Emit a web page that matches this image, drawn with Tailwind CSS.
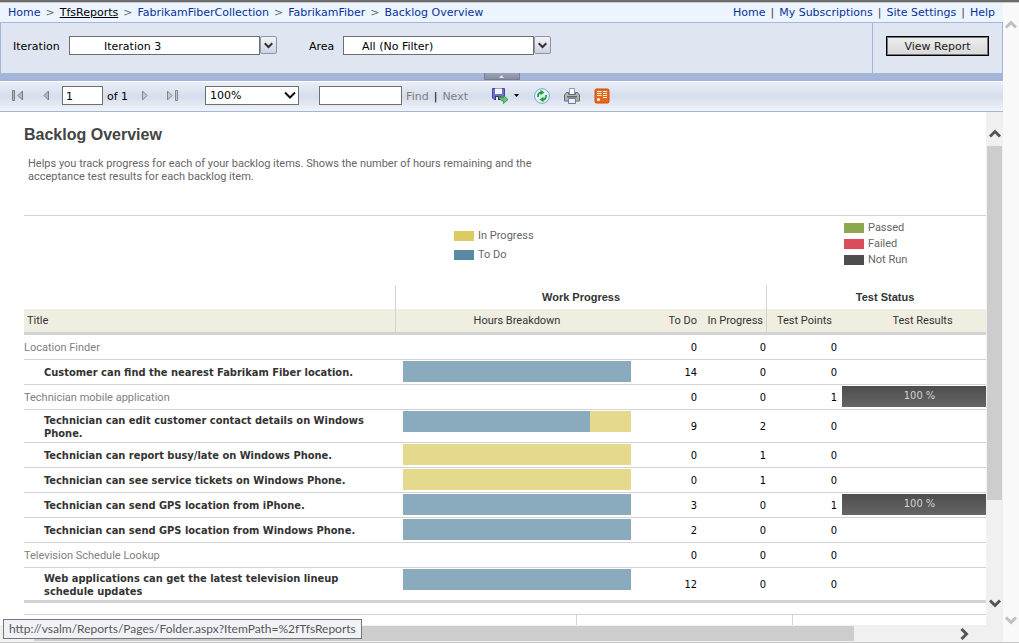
<!DOCTYPE html>
<html lang="en">
    <head>
        <meta charset="UTF-8">
        <meta name="viewport" content="width=device-width, initial-scale=1.0">
        <title>Backlog Overview</title>
        <script src="https://cdn.jsdelivr.net/npm/@tailwindcss/browser@4"></script>
    </head>
    <body class="h-screen flex flex-col bg-white border-t-2 border-[#6d6b6b] text-[11px] text-black font-['DejaVu_Sans','Verdana',sans-serif] overflow-hidden">
        <div class="flex flex-1 min-h-0 border-t border-b border-[#c8c8c8]">
            <div class="relative flex flex-col flex-1 min-w-0">

                <!-- Breadcrumb -->
                <header class="flex items-center justify-between h-[19px] shrink-0 px-2 pt-[2px] bg-[#ecf4ff] text-[#0a3399] whitespace-nowrap">
                    <nav class="flex gap-[5px]">
                        <a href="#">Home</a>
                        <span class="text-[#6b6b6b]">&gt;</span>
                        <a href="#" class="text-black underline">TfsReports</a>
                        <span class="text-[#6b6b6b]">&gt;</span>
                        <a href="#">FabrikamFiberCollection</a>
                        <span class="text-[#6b6b6b]">&gt;</span>
                        <a href="#">FabrikamFiber</a>
                        <span class="text-[#6b6b6b]">&gt;</span>
                        <a href="#">Backlog Overview</a>
                    </nav>
                    <nav class="flex gap-[5px]">
                        <a href="#">Home</a>
                        <span class="text-[#444]">|</span>
                        <a href="#">My Subscriptions</a>
                        <span class="text-[#444]">|</span>
                        <a href="#">Site Settings</a>
                        <span class="text-[#444]">|</span>
                        <a href="#">Help</a>
                    </nav>
                </header>

                <!-- Parameters -->
                <section class="flex h-[51px] shrink-0 border-t border-x border-[#a4b6dc] bg-[#dfe6f2]">
                    <div class="flex flex-1 items-start pt-[13px] pl-3">
                        <label for="iteration" class="w-14 pt-px leading-[19px]">Iteration</label>
                        <select id="iteration" class="appearance-none w-[191px] h-[19px] pt-[2px] pl-[34px] bg-white border border-[#6e6e6e]">
                            <option>Iteration 3</option>
                        </select>
                        <button aria-label="Open iteration list" class="flex items-center justify-center w-[17px] h-[18px] rounded-xs border border-[#8d94a3] bg-linear-to-b from-[#f3f4f8] to-[#cdd3e2]">
                            <svg class="w-[9px] h-[7px]" viewBox="0 0 9 7" fill="none" stroke="#333" stroke-width="2"><path d="M0.7 1.2 4.5 5 8.3 1.2"/></svg>
                        </button>
                        <label for="area" class="w-[34px] ml-8 pt-px leading-[19px]">Area</label>
                        <select id="area" class="appearance-none w-[191px] h-[19px] pt-[2px] pl-[18px] bg-white border border-[#6e6e6e]">
                            <option>All (No Filter)</option>
                        </select>
                        <button aria-label="Open area list" class="flex items-center justify-center w-[17px] h-[18px] rounded-xs border border-[#8d94a3] bg-linear-to-b from-[#f3f4f8] to-[#cdd3e2]">
                            <svg class="w-[9px] h-[7px]" viewBox="0 0 9 7" fill="none" stroke="#333" stroke-width="2"><path d="M0.7 1.2 4.5 5 8.3 1.2"/></svg>
                        </button>
                    </div>
                    <div class="w-[130px] pt-[13px] pl-[13px] border-l border-[#a4b6dc]">
                        <button class="w-[103px] h-5 pt-[2px] border border-black bg-linear-to-b from-[#eee] to-[#d8d8d8] shadow-[inset_0_0_0_1px_#777] text-[#222]">View Report</button>
                    </div>
                </section>

                <!-- Collapse bar -->
                <div class="flex justify-center h-2 shrink-0 bg-[#a4b5d7]">
                    <button aria-label="Hide parameters" class="flex items-center justify-center w-9 h-[7px] border-b border-x border-[#777f92] bg-linear-to-b from-[#9aa3b8] to-[#878fa3]">
                        <svg class="w-[5px] h-[3px]" viewBox="0 0 5 3"><path d="M0 3 2.5 0 5 3z" fill="#dfe3ec"/></svg>
                    </button>
                </div>

                <!-- Report toolbar -->
                <section class="flex items-center h-[31px] shrink-0 pl-3 pb-[2px] border-t border-white border-b border-b-[#a4b6d8] bg-linear-to-b from-[#eaeef8] from-0% via-[#d6ddec] via-50% to-[#f0f3f9]">
                    <button aria-label="First page" class="w-3 h-3">
                        <svg class="w-3 h-3" viewBox="0 0 12 12" fill="#b9b9b9" stroke="#7c7c7c"><path d="M0.500 0.500h2v10h-2zM10.500 1v9L6 5.500z"/></svg>
                    </button>
                    <button aria-label="Previous page" class="w-3 h-3 ml-[18px]">
                        <svg class="w-3 h-3" viewBox="0 0 12 12" fill="#b9b9b9" stroke="#7c7c7c"><path d="M6.500 1v9L2 5.500z"/></svg>
                    </button>
                    <input aria-label="Current page" value="1" class="w-[41px] h-[19px] ml-2 pt-[2px] pl-[3px] bg-white border border-[#6e6e6e]">
                    <span class="ml-1 pt-[3px]">of 1</span>
                    <button aria-label="Next page" class="w-3 h-3 ml-3">
                        <svg class="w-3 h-3" viewBox="0 0 12 12" fill="#cacaca" stroke="#858585"><path d="M2.500 1v9L7 5.500z"/></svg>
                    </button>
                    <button aria-label="Last page" class="w-3 h-3 ml-[15px]">
                        <svg class="w-3 h-3" viewBox="0 0 12 12" fill="#cacaca" stroke="#858585"><path d="M8.500 0.500h2v10h-2zM0.500 1v9L5 5.500z"/></svg>
                    </button>
                    <div class="relative ml-[26px]">
                        <select aria-label="Zoom" class="block appearance-none w-[94px] h-[19px] pt-px pl-1 bg-white border border-[#6e6e6e]">
                            <option>100%</option>
                        </select>
                        <svg class="absolute right-[3px] top-[5px] w-3 h-[9px] pointer-events-none" viewBox="0 0 12 9" fill="none" stroke="#111" stroke-width="2"><path d="M1 1.500 6 6.500 11 1.500"/></svg>
                    </div>
                    <input aria-label="Find text" class="w-[83px] h-[19px] ml-5 px-1 bg-white border border-[#6e6e6e]">
                    <a href="#" class="ml-1 pt-[3px] text-[#808080]">Find</a>
                    <span class="mx-[5px] pt-[3px]">|</span>
                    <a href="#" class="pt-[3px] text-[#808080]">Next</a>
                    <button aria-label="Export" class="flex items-center gap-[6px] ml-6">
                        <svg class="w-4 h-4" viewBox="0 0 16 16">
                            <path d="M0.500 0.500h12v11H2l-1.500-1.500z" fill="#6a6fd0" stroke="#4347a0"/>
                            <path d="M3 0.500h7v5.500H3z" fill="#f4f5fd"/>
                            <path d="M3 8h6v4H3z" fill="#33367c"/><path d="M4 9h2v3H4z" fill="#e6e8f6"/>
                            <path d="M7 7.500c1 2 2.500 2.500 4.500 2.500V7.500L16 11.500l-4.500 4V13C9 13 7 11 7 7.500z" fill="#6cc36c" stroke="#2f8f43" stroke-width=".8"/>
                        </svg>
                        <svg class="w-[5px] h-[3px]" viewBox="0 0 5 3"><path d="M0 0h5L2.500 3z"/></svg>
                    </button>
                    <button aria-label="Refresh" class="ml-[15px]">
                        <svg class="w-4 h-4" viewBox="0 0 16 16">
                            <circle cx="8" cy="8" r="7.400" fill="#e4f0fa" stroke="#78a8d8"/>
                            <path d="M4 9C3.800 6 5 4.500 7 4.500" fill="none" stroke="#23a033" stroke-width="1.800"/><path d="M6.500 1.800 10.500 4.500 6.500 7.200z" fill="#23a033"/>
                            <path d="M12 7C12.200 10 11 11.500 9 11.500" fill="none" stroke="#23a033" stroke-width="1.800"/><path d="M9.500 8.800 5.500 11.500 9.500 14.200z" fill="#23a033"/>
                        </svg>
                    </button>
                    <button aria-label="Print" class="ml-[14px]">
                        <svg class="w-4 h-4" viewBox="0 0 16 16">
                            <path d="M5.500 0.500h5v6h-5z" fill="#fff" stroke="#7f9bbd"/>
                            <path d="M2.500 4.500h2v2h7v-2h2L15.500 7v6H0.500V7z" fill="#b5b5b5" stroke="#686868"/>
                            <path d="M3 8h10v1.500H3z" fill="#666"/><path d="M12.500 10h1.500v1h-1.500z" fill="#76d06a"/>
                            <path d="M4.500 10.500h7v5h-7z" fill="#e9f1fc" stroke="#6a7fa0"/>
                        </svg>
                    </button>
                    <button aria-label="Export to data feed" class="ml-[14px]">
                        <svg class="w-4 h-4" viewBox="0 0 16 16">
                            <rect x="1" y="1" width="14" height="14" rx="1.500" fill="#e5681c" stroke="#c94f0c"/>
                            <path d="M3 3.500h4.500M3 5.500h4.500M3 7.500h4.500M9 3.500h4M9 5.500h4M9 7.500h4M9 9.500h4" stroke="#fff3e2"/>
                            <circle cx="4.500" cy="11.500" r="1.500" fill="#fff"/>
                        </svg>
                    </button>
                </section>

                <!-- Report -->
                <div class="flex flex-1 min-h-0">
                    <main class="flex-1 min-w-0 overflow-hidden pl-6 pt-[13px] font-['Roboto','Tahoma',sans-serif] leading-[13px]">
                        <h1 class="font-['Liberation_Sans',sans-serif] text-base leading-5 font-bold text-[#444]">Backlog Overview</h1>
                        <p class="w-[510px] h-[58px] mt-3 pl-1 text-[#666]">Helps you track progress for each of your backlog items. Shows the number of hours remaining and the acceptance test results for each backlog item.</p>

                        <!-- Legends -->
                        <div class="flex w-[979px] h-[70px] border-t border-[#d3d3d3] text-[#666]">
                            <ul class="flex flex-col gap-[6px] w-[390px] ml-[430px] pt-[13px]">
                                <li class="flex items-center gap-1"><span class="w-5 h-[10px] bg-[#dccb63]"></span>In Progress</li>
                                <li class="flex items-center gap-1"><span class="w-5 h-[10px] bg-[#5a8aa3]"></span>To Do</li>
                            </ul>
                            <ul class="flex flex-col gap-[3px] pt-[5px]">
                                <li class="flex items-center gap-1"><span class="w-5 h-[10px] bg-[#8da74f]"></span>Passed</li>
                                <li class="flex items-center gap-1"><span class="w-5 h-[10px] bg-[#db4d5c]"></span>Failed</li>
                                <li class="flex items-center gap-1"><span class="w-5 h-[10px] bg-[#4d4d4d]"></span>Not Run</li>
                            </ul>
                        </div>

                        <table class="table-fixed w-[979px] border-separate border-spacing-0 [&_td]:p-0 [&_td]:border-b [&_td]:border-[#d3d3d3] [&_tbody_tr]:h-[25px]">
                            <colgroup>
                                <col class="w-[372px]"><col class="w-[242px]"><col class="w-[60px]"><col class="w-[69px]"><col class="w-[75px]"><col class="w-[161px]">
                            </colgroup>
                            <thead class="text-[#333]">
                                <tr class="h-6 font-['Liberation_Sans',sans-serif]">
                                    <th class="p-0 border-r border-[#d3d3d3]"></th>
                                    <th colspan="3" class="p-0 border-r border-[#d3d3d3] font-bold text-center">Work Progress</th>
                                    <th colspan="2" class="p-0 font-bold text-center">Test Status</th>
                                </tr>
                                <tr class="h-[26px] bg-[#f0eee1] [&_th]:p-0 [&_th]:font-normal [&_th]:border-b-3 [&_th]:border-[#d3d3d3]">
                                    <th class="border-r text-left"><span class="pl-[3px]">Title</span></th>
                                    <th>Hours Breakdown</th>
                                    <th class="text-right"><span class="pr-px">To Do</span></th>
                                    <th class="border-r text-right"><span class="pr-[3px]">In Progress</span></th>
                                    <th>Test Points</th>
                                    <th>Test Results</th>
                                </tr>
                            </thead>
                            <tbody class="[&_td:nth-child(2)]:align-top [&_td:nth-child(n+3):nth-child(-n+5)]:text-right [&_td:nth-child(n+3):nth-child(-n+4)]:pr-px [&_td:nth-child(5)]:pr-[5px] [&_td:nth-child(n+3):nth-child(-n+5)]:font-['DejaVu_Sans_Condensed','Tahoma',sans-serif]">
                                <tr>
                                    <td class="text-[#808080]">Location Finder</td>
                                    <td></td><td>0</td><td>0</td><td>0</td><td></td>
                                </tr>
                                <tr>
                                    <td class="font-['DejaVu_Sans_Condensed','Tahoma',sans-serif] font-bold text-[#333]"><div class="pl-5">Customer can find the nearest Fabrikam Fiber location.</div></td>
                                    <td><div class="w-[228px] h-[21px] mt-px ml-[7px] bg-[#8aaabd]"></div></td>
                                    <td>14</td><td>0</td><td>0</td><td></td>
                                </tr>
                                <tr>
                                    <td class="text-[#808080]">Technician mobile application</td>
                                    <td></td><td>0</td><td>0</td><td>1</td>
                                    <td class="align-top"><div class="h-[21px] mt-px pr-[6px] bg-linear-to-b from-[#4d4d4d] to-[#666] text-[#d3d3d3] text-center leading-5 font-['DejaVu_Sans_Condensed','Tahoma',sans-serif]">100 %</div></td>
                                </tr>
                                <tr class="h-[33px]!">
                                    <td class="font-['DejaVu_Sans_Condensed','Tahoma',sans-serif] font-bold text-[#333]"><div class="pt-px pl-5 pr-4">Technician can edit customer contact details on Windows Phone.</div></td>
                                    <td><div class="flex w-[228px] h-[21px] mt-px ml-[7px] bg-[#e4d98c]"><div class="bg-[#8aaabd]" style="width: 81.8%"></div></div></td>
                                    <td>9</td><td>2</td><td>0</td><td></td>
                                </tr>
                                <tr>
                                    <td class="font-['DejaVu_Sans_Condensed','Tahoma',sans-serif] font-bold text-[#333]"><div class="pl-5">Technician can report busy/late on Windows Phone.</div></td>
                                    <td><div class="w-[228px] h-[21px] mt-px ml-[7px] bg-[#e4d98c]"></div></td>
                                    <td>0</td><td>1</td><td>0</td><td></td>
                                </tr>
                                <tr>
                                    <td class="font-['DejaVu_Sans_Condensed','Tahoma',sans-serif] font-bold text-[#333]"><div class="pl-5">Technician can see service tickets on Windows Phone.</div></td>
                                    <td><div class="w-[228px] h-[21px] mt-px ml-[7px] bg-[#e4d98c]"></div></td>
                                    <td>0</td><td>1</td><td>0</td><td></td>
                                </tr>
                                <tr>
                                    <td class="font-['DejaVu_Sans_Condensed','Tahoma',sans-serif] font-bold text-[#333]"><div class="pl-5">Technician can send GPS location from iPhone.</div></td>
                                    <td><div class="w-[228px] h-[21px] mt-px ml-[7px] bg-[#8aaabd]"></div></td>
                                    <td>3</td><td>0</td><td>1</td>
                                    <td class="align-top"><div class="h-[21px] mt-px pr-[6px] bg-linear-to-b from-[#4d4d4d] to-[#666] text-[#d3d3d3] text-center leading-5 font-['DejaVu_Sans_Condensed','Tahoma',sans-serif]">100 %</div></td>
                                </tr>
                                <tr>
                                    <td class="font-['DejaVu_Sans_Condensed','Tahoma',sans-serif] font-bold text-[#333]"><div class="pl-5">Technician can send GPS location from Windows Phone.</div></td>
                                    <td><div class="w-[228px] h-[21px] mt-px ml-[7px] bg-[#8aaabd]"></div></td>
                                    <td>2</td><td>0</td><td>0</td><td></td>
                                </tr>
                                <tr>
                                    <td class="text-[#808080]">Television Schedule Lookup</td>
                                    <td></td><td>0</td><td>0</td><td>0</td><td></td>
                                </tr>
                                <tr class="h-[35px]! [&_td]:border-b-3">
                                    <td class="font-['DejaVu_Sans_Condensed','Tahoma',sans-serif] font-bold text-[#333]"><div class="pt-px pl-5 pr-10">Web applications can get the latest television lineup schedule updates</div></td>
                                    <td><div class="w-[228px] h-[21px] mt-px ml-[7px] bg-[#8aaabd]"></div></td>
                                    <td>12</td><td>0</td><td>0</td><td></td>
                                </tr>
                            </tbody>
                        </table>

                        <!-- Top of the report footer -->
                        <div class="flex w-[979px] h-10 mt-[11px] border-t border-[#d3d3d3]">
                            <div class="w-[553px] border-r border-[#d3d3d3]"></div>
                            <div class="w-[216px] border-r border-[#d3d3d3]"></div>
                        </div>
                    </main>

                    <!-- Report vertical scrollbar -->
                    <div class="flex flex-col items-center w-[17px] shrink-0 pt-[17px] bg-[#f0f0f0]">
                        <svg class="w-3 h-[9px] shrink-0" viewBox="0 0 12 9" fill="none" stroke="#555" stroke-width="3"><path d="M1 7.500 6 2.500 11 7.500"/></svg>
                        <div class="w-[15px] flex-1 mt-2 bg-[#cdcdcd]"></div>
                        <svg class="w-3 h-[9px] shrink-0 mt-[99px] mb-[17px]" viewBox="0 0 12 9" fill="none" stroke="#555" stroke-width="3"><path d="M1 1.500 6 6.500 11 1.500"/></svg>
                    </div>
                </div>

                <!-- Report horizontal scrollbar -->
                <div class="flex items-center h-[17px] shrink-0 pl-[34px] bg-[#f0f0f0]">
                    <div class="flex-1 h-[15px] bg-[#cdcdcd]"></div>
                    <svg class="w-[9px] h-3 ml-[106px] mr-[34px]" viewBox="0 0 9 12" fill="none" stroke="#555" stroke-width="3"><path d="M1.500 1 6.500 6 1.500 11"/></svg>
                </div>

                <!-- Link target shown by the browser -->
                <div class="absolute left-[3px] bottom-[3px] h-5 px-[5px] border border-[#767676] bg-[#f1f2f7] text-xs leading-[18px] text-[#575757] whitespace-nowrap font-['Lato','Segoe_UI',sans-serif]">http://vsalm/Reports/Pages/Folder.aspx?ItemPath=%2fTfsReports</div>
            </div>

            <!-- Page scrollbar -->
            <div class="flex flex-col items-center justify-between w-4 shrink-0 pt-[17px] pb-[17px] bg-[#f9f9f9]">
                <svg class="w-3 h-[9px]" viewBox="0 0 12 9" fill="none" stroke="#bfbfbf" stroke-width="3"><path d="M1 7.500 6 2.500 11 7.500"/></svg>
                <svg class="w-3 h-[9px]" viewBox="0 0 12 9" fill="none" stroke="#bfbfbf" stroke-width="3"><path d="M1 1.500 6 6.500 11 1.500"/></svg>
            </div>
        </div>
    </body>
</html>
